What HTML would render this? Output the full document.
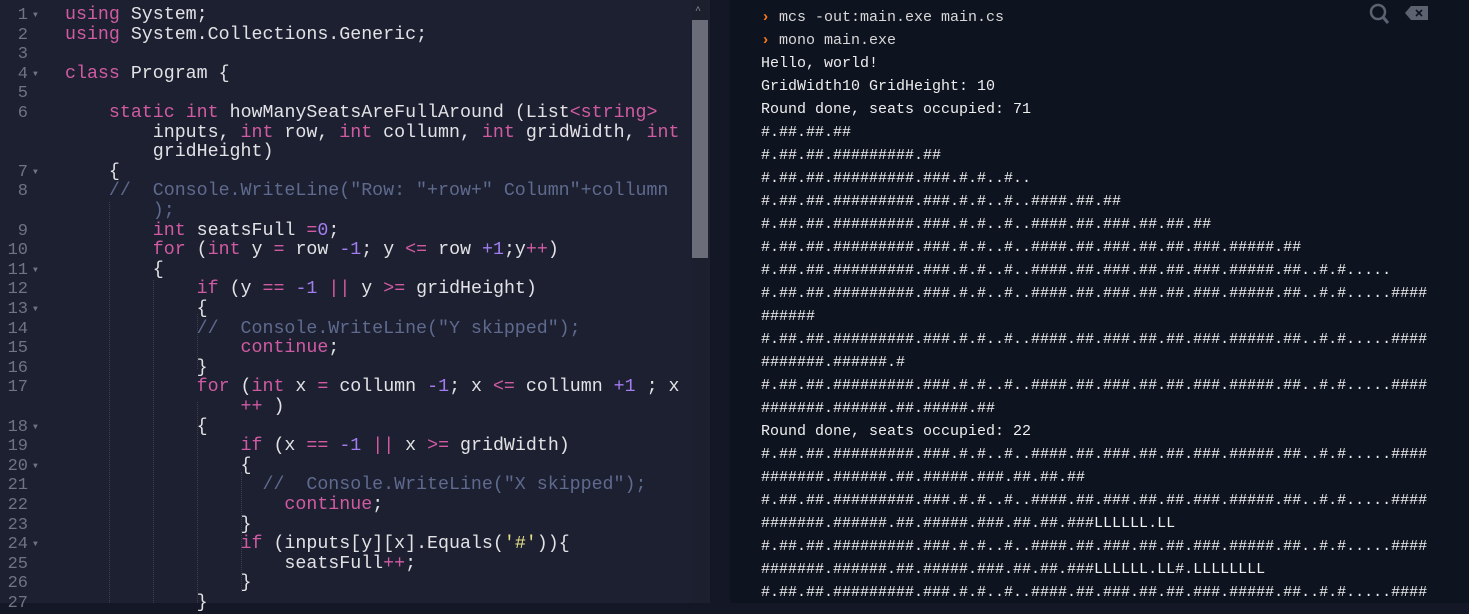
<!DOCTYPE html>
<html><head><meta charset="utf-8"><style>
*{margin:0;padding:0;box-sizing:border-box}
body{width:1469px;height:603px;overflow:hidden;background:#131726;position:relative;font-family:"Liberation Mono",monospace}
#ed{position:absolute;left:0;top:0;width:710px;height:603px;background:#1d2030}
.r{position:absolute;left:65px;white-space:pre;font-size:18.3px;line-height:19.6px;height:19.6px;color:#e2e2e6;margin-top:2px}
.n{position:absolute;left:0;width:28px;text-align:right;font-size:17px;line-height:19.6px;color:#6f7482;margin-top:2px}
.f{position:absolute;left:33px;font-size:8px;line-height:19.6px;color:#6f7482;margin-top:2px}
.k{color:#d05ba3}.o{color:#d05ba3}.m{color:#a27df0}.c{color:#5e6a8e}.s{color:#e6e08a}
.g{position:absolute;width:0;border-left:1px dotted #3a3e50}
#sb{position:absolute;left:692px;top:0;width:16px;height:603px;background:#1c1f2d}
#th{position:absolute;left:692px;top:20px;width:16px;height:238px;background:#6b6e78}
#term{position:absolute;left:730px;top:0;width:739px;height:603px;background:#0e1320}
.t{position:absolute;left:761px;white-space:pre;font-size:15px;line-height:23px;color:#eeeeee}
.p{color:#ff7a1a;font-weight:bold}
</style></head><body>
<div id="ed"></div>
<div class="g" style="left:109px;top:202px;height:401px"></div>
<div class="g" style="left:153px;top:280px;height:323px"></div>
<div class="g" style="left:197px;top:402px;height:201px"></div>
<div class="g" style="left:197px;top:314px;height:55px"></div>
<div class="g" style="left:241px;top:472px;height:120px"></div>
<div id="sb"></div><div id="th"></div>
<div style="position:absolute;left:695px;top:6px;color:#8a8e98;font-size:10px">^</div>

<div class="n" style="top:4px">1</div><div class="f" style="top:4px">▼</div>
<div class="r" style="top:4px"><span class="k">using</span> System;</div>
<div class="n" style="top:23.6px">2</div>
<div class="r" style="top:23.6px"><span class="k">using</span> System.Collections.Generic;</div>
<div class="n" style="top:43.2px">3</div>
<div class="n" style="top:62.8px">4</div><div class="f" style="top:62.8px">▼</div>
<div class="r" style="top:62.8px"><span class="k">class</span> Program {</div>
<div class="n" style="top:82.4px">5</div>
<div class="n" style="top:102px">6</div>
<div class="r" style="top:102px">    <span class="k">static</span> <span class="k">int</span> howManySeatsAreFullAround (List<span class="o">&lt;</span><span class="k">string</span><span class="o">&gt;</span></div>
<div class="r" style="top:121.6px">        inputs, <span class="k">int</span> row, <span class="k">int</span> collumn, <span class="k">int</span> gridWidth, <span class="k">int</span></div>
<div class="r" style="top:141.2px">        gridHeight)</div>
<div class="n" style="top:160.8px">7</div><div class="f" style="top:160.8px">▼</div>
<div class="r" style="top:160.8px">    {</div>
<div class="n" style="top:180.4px">8</div>
<div class="r c" style="top:180.4px">    //  Console.WriteLine("Row: "+row+" Column"+collumn</div>
<div class="r c" style="top:200px">        );</div>
<div class="n" style="top:219.6px">9</div>
<div class="r" style="top:219.6px">        <span class="k">int</span> seatsFull <span class="o">=</span><span class="m">0</span>;</div>
<div class="n" style="top:239.2px">10</div>
<div class="r" style="top:239.2px">        <span class="k">for</span> (<span class="k">int</span> y <span class="o">=</span> row <span class="m">-1</span>; y <span class="o">&lt;=</span> row <span class="m">+1</span>;y<span class="o">++</span>)</div>
<div class="n" style="top:258.8px">11</div><div class="f" style="top:258.8px">▼</div>
<div class="r" style="top:258.8px">        {</div>
<div class="n" style="top:278.4px">12</div>
<div class="r" style="top:278.4px">            <span class="k">if</span> (y <span class="o">==</span> <span class="m">-1</span> <span class="o">||</span> y <span class="o">&gt;=</span> gridHeight)</div>
<div class="n" style="top:298px">13</div><div class="f" style="top:298px">▼</div>
<div class="r" style="top:298px">            {</div>
<div class="n" style="top:317.6px">14</div>
<div class="r c" style="top:317.6px">            //  Console.WriteLine("Y skipped");</div>
<div class="n" style="top:337.2px">15</div>
<div class="r" style="top:337.2px">                <span class="k">continue</span>;</div>
<div class="n" style="top:356.8px">16</div>
<div class="r" style="top:356.8px">            }</div>
<div class="n" style="top:376.4px">17</div>
<div class="r" style="top:376.4px">            <span class="k">for</span> (<span class="k">int</span> x <span class="o">=</span> collumn <span class="m">-1</span>; x <span class="o">&lt;=</span> collumn <span class="m">+1</span> ; x</div>
<div class="r" style="top:396px">                <span class="o">++</span> )</div>
<div class="n" style="top:415.6px">18</div><div class="f" style="top:415.6px">▼</div>
<div class="r" style="top:415.6px">            {</div>
<div class="n" style="top:435.2px">19</div>
<div class="r" style="top:435.2px">                <span class="k">if</span> (x <span class="o">==</span> <span class="m">-1</span> <span class="o">||</span> x <span class="o">&gt;=</span> gridWidth)</div>
<div class="n" style="top:454.8px">20</div><div class="f" style="top:454.8px">▼</div>
<div class="r" style="top:454.8px">                {</div>
<div class="n" style="top:474.4px">21</div>
<div class="r c" style="top:474.4px">                  //  Console.WriteLine("X skipped");</div>
<div class="n" style="top:494px">22</div>
<div class="r" style="top:494px">                    <span class="k">continue</span>;</div>
<div class="n" style="top:513.6px">23</div>
<div class="r" style="top:513.6px">                }</div>
<div class="n" style="top:533.2px">24</div><div class="f" style="top:533.2px">▼</div>
<div class="r" style="top:533.2px">                <span class="k">if</span> (inputs[y][x].Equals(<span class="s">'#'</span>)){</div>
<div class="n" style="top:552.8px">25</div>
<div class="r" style="top:552.8px">                    seatsFull<span class="o">++</span>;</div>
<div class="n" style="top:572.4px">26</div>
<div class="r" style="top:572.4px">                }</div>
<div class="n" style="top:592px">27</div>
<div class="r" style="top:592px">            }</div>

<div id="term"></div>
<svg style="position:absolute;left:1368px;top:3px" width="24" height="22" viewBox="0 0 24 22"><circle cx="10" cy="9" r="7" fill="none" stroke="#5d6270" stroke-width="2.5"/><path d="M15 14l5 6" stroke="#5d6270" stroke-width="3"/></svg>
<svg style="position:absolute;left:1405px;top:6px" width="24" height="14" viewBox="0 0 24 14"><path d="M6 0H23V14H6L0 7Z" fill="#5d6270"/><path d="M11 4l6 6M17 4l-6 6" stroke="#0e1320" stroke-width="1.6"/></svg>
<div class="t" style="top:5.5px;color:#d8d8d8"><span class="p">›</span> mcs -out:main.exe main.cs</div>
<div class="t" style="top:28.5px;color:#d8d8d8"><span class="p">›</span> mono main.exe</div>
<div class="t" style="top:51.5px">Hello, world!
GridWidth10 GridHeight: 10
Round done, seats occupied: 71
#.##.##.##
#.##.##.#########.##
#.##.##.#########.###.#.#..#..
#.##.##.#########.###.#.#..#..####.##.##
#.##.##.#########.###.#.#..#..####.##.###.##.##.##
#.##.##.#########.###.#.#..#..####.##.###.##.##.###.#####.##
#.##.##.#########.###.#.#..#..####.##.###.##.##.###.#####.##..#.#.....
#.##.##.#########.###.#.#..#..####.##.###.##.##.###.#####.##..#.#.....####
######
#.##.##.#########.###.#.#..#..####.##.###.##.##.###.#####.##..#.#.....####
#######.######.#
#.##.##.#########.###.#.#..#..####.##.###.##.##.###.#####.##..#.#.....####
#######.######.##.#####.##
Round done, seats occupied: 22
#.##.##.#########.###.#.#..#..####.##.###.##.##.###.#####.##..#.#.....####
#######.######.##.#####.###.##.##.##
#.##.##.#########.###.#.#..#..####.##.###.##.##.###.#####.##..#.#.....####
#######.######.##.#####.###.##.##.###LLLLLL.LL
#.##.##.#########.###.#.#..#..####.##.###.##.##.###.#####.##..#.#.....####
#######.######.##.#####.###.##.##.###LLLLLL.LL#.LLLLLLLL
#.##.##.#########.###.#.#..#..####.##.###.##.##.###.#####.##..#.#.....####</div>
</body></html>
